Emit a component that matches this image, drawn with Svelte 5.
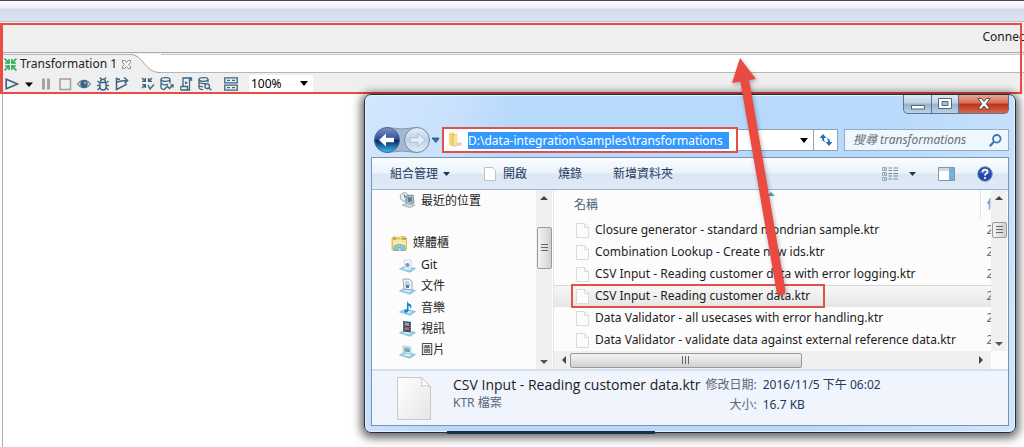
<script lang="ts">
  type NavItem = { name: string; kind: string; child: boolean } | null;

  // null leaves an empty row between the groups
  const navItems: NavItem[] = [
    { name: '最近的位置', kind: 'recent', child: true },
    null,
    { name: '媒體櫃', kind: 'library', child: false },
    { name: 'Git', kind: 'git', child: true },
    { name: '文件', kind: 'doc', child: true },
    { name: '音樂', kind: 'music', child: true },
    { name: '視訊', kind: 'video', child: true },
    { name: '圖片', kind: 'picture', child: true }
  ];

  const files = [
    'Closure generator - standard mondrian sample.ktr',
    'Combination Lookup - Create new ids.ktr',
    'CSV Input - Reading customer data with error logging.ktr',
    'CSV Input - Reading customer data.ktr',
    'Data Validator - all usecases with error handling.ktr',
    'Data Validator - validate data against external reference data.ktr'
  ];

  let selected = $state('CSV Input - Reading customer data.ktr');
  let path = $state('D:\\data-integration\\samples\\transformations');
  let search = $state('');
  let zoom = $state('100%');
</script>

<main>
  <div class="titlebar"></div>

  <section class="spoon">
    <header class="perspective">Connect</header>

    <div class="tabs">
      <div class="tab">
        <svg width="13" height="13" viewBox="0 0 12 12" fill="none" stroke="#22ab52" stroke-width="1.4">
          <path d="M0.5 0.5l4 4M11.5 0.5l-4 4M0.5 11.5l4-4M11.5 11.5l-4-4" />
          <path d="M1 4.7h3.7V1M11 4.7H7.3V1M1 7.3h3.7V11M11 7.3H7.3V11" />
        </svg>
        <span>Transformation 1</span>
        <button class="tab-close" aria-label="Close tab">
          <svg width="9" height="9" viewBox="0 0 9 9" fill="#fff" stroke="#777" stroke-width="0.9">
            <path d="M0.5 0.5h2l2 2 2-2h2v2l-2 2 2 2v2h-2l-2-2-2 2h-2v-2l2-2-2-2z" />
          </svg>
        </button>
      </div>
      <svg class="tab-curve" width="30" height="19" viewBox="0 0 30 19">
        <path d="M0 0.5c12 0 14 18 28 18H30V19H0z" fill="#efefef" />
        <path d="M0 0.5c12 0 14 18 28 18H30" fill="none" stroke="#a3a3a3" />
      </svg>
      <div class="tab-rest"></div>
    </div>

    <div class="toolbar">
      <button aria-label="Run">
        <svg width="14" height="14" viewBox="0 0 14 14" fill="none" stroke="#3d6480" stroke-width="1.6">
          <path d="M1.2 2.2v9.6L12.500 7z" />
        </svg>
      </button>
      <button aria-label="Run options">
        <svg width="10" height="14" viewBox="0 0 10 14"><path d="M1 5.500h8L5 10z" fill="#000" /></svg>
      </button>
      <button aria-label="Pause">
        <svg width="14" height="14" viewBox="0 0 14 14" fill="#a3a3a3"><path d="M3 1.500h3v11H3zM8 1.500h3v11H8z" /></svg>
      </button>
      <button aria-label="Stop">
        <svg width="14" height="14" viewBox="0 0 14 14" fill="none" stroke="#a0a0a0" stroke-width="1.5">
          <path d="M2 2h10.500v10.500H2z" />
        </svg>
      </button>
      <button aria-label="Preview">
        <svg width="14" height="14" viewBox="0 0 14 14">
          <path d="M0.500 7c3.500-5 9.500-5 13 0c-3.500 5-9.500 5-13 0z" fill="#c8d5de" stroke="#3d6480" />
          <circle cx="7" cy="7" r="3.700" fill="#3d6480" />
          <circle cx="8" cy="6" r="1" fill="#b9cad6" />
        </svg>
      </button>
      <button aria-label="Debug">
        <svg width="14" height="14" viewBox="0 0 14 14" fill="none" stroke="#3d6480" stroke-width="1.4">
          <path d="M4 5.500h6v4.500q0 3-3 3t-3-3zM4.500 5.200q0-3 2.500-3t2.500 3M4 8.500H1M10 8.500h3M4 6L1.500 4M10 6l2.500-2M4 10.500L1.500 13M10 10.500l2.500 2.500M5.500 2.500L4 0.500M8.500 2.500L10 0.500" />
        </svg>
      </button>
      <button aria-label="Replay">
        <svg width="14" height="14" viewBox="0 0 14 14" fill="none" stroke="#3d6480" stroke-width="1.500">
          <path d="M5 2.500L1.500 1.500v11L12 7.200M1.500 5C5 5 7 3 12.500 3.500M9 0.500l3.500 3L9.500 6.500" />
        </svg>
      </button>
      <button class="spaced" aria-label="Verify">
        <svg width="14" height="14" viewBox="0 0 14 14" fill="none" stroke="#3d6480" stroke-width="1.400">
          <path d="M1 1l3 3M11 1L8 4M1 11l3-3M1 4.400h3.300V1M11 4.400H7.600V1M1 7.600h3.300V11M7 8l2 4 4-4.500" />
        </svg>
      </button>
      <button aria-label="Analyze impact">
        <svg width="14" height="14" viewBox="0 0 14 14" fill="none" stroke="#3d6480" stroke-width="1.300">
          <ellipse cx="5.500" cy="2.500" rx="4.500" ry="1.800" />
          <path d="M1 2.500v8.500q1 1.500 4 1.700M10 2.500v4M1 6.500q3 2 7 1M4.500 12l3-2.500 2 2L13 8M10.500 8H13v2.500" />
        </svg>
      </button>
      <button aria-label="Get SQL">
        <svg width="14" height="14" viewBox="0 0 14 14" fill="none" stroke="#3d6480" stroke-width="1.300">
          <path d="M4 9V1h8.500v2H10.500v10H2q-1-1.500 0-3.500h6.500V13M10.500 1v3" />
          <path d="M6 4l3 1.700-3 1.700z" fill="#3d6480" stroke="none" />
        </svg>
      </button>
      <button aria-label="Explore database">
        <svg width="14" height="14" viewBox="0 0 14 14" fill="none" stroke="#3d6480" stroke-width="1.300">
          <ellipse cx="5.500" cy="2.500" rx="4.500" ry="1.800" />
          <path d="M1 2.500v8.500q1 1.500 4 1.700M10 2.500v3M1 5.300q3 2 7 1M1 8.500q2 1.500 4 1.300" />
          <circle cx="9.200" cy="9.200" r="2.300" />
          <path d="M11 11l2.300 2.300" />
        </svg>
      </button>
      <button class="spaced" aria-label="Show results">
        <svg width="14" height="14" viewBox="0 0 14 14" fill="none" stroke="#3d6480" stroke-width="1.300">
          <path d="M0.800 0.800h12.400v5H0.800zM0.800 8.200h12.400v5H0.800zM3 3.300h3M8 3.300h3M3 10.700h3M8 10.700h3" />
        </svg>
      </button>
      <div class="zoom">
        <select aria-label="Zoom" bind:value={zoom}>
          <option>100%</option>
          <option>75%</option>
          <option>50%</option>
        </select>
        <svg width="8" height="5" viewBox="0 0 8 5"><path d="M0 0h8L4 5z" fill="#000" /></svg>
      </div>
    </div>
  </section>

  <div class="canvas"></div>

  <section class="explorer">
    <div class="caption">
      <button class="min" aria-label="Minimize">
        <svg width="14" height="14" viewBox="0 0 14 14"><rect x="0.500" y="8.500" width="13" height="3.500" fill="#fff" stroke="#5b6674" /></svg>
      </button>
      <button class="max" aria-label="Maximize">
        <svg width="14" height="14" viewBox="0 0 14 14">
          <path d="M0.500 1.500h13v10H0.500z" fill="#fff" stroke="#5b6674" />
          <path d="M4 4.500h6v4H4z" fill="#a9bed6" stroke="#5b6674" />
        </svg>
      </button>
      <button class="close" aria-label="Close">
        <svg width="14" height="14" viewBox="0 0 14 14">
          <path d="M1 1.500h3.500L7 4.500l2.500-3H13L9.200 6.800 13 12H9.500L7 9l-2.500 3H1l3.800-5.200z" fill="#fff" stroke="#5a4650" />
        </svg>
      </button>
    </div>

    <div class="address-row">
      <div class="history">
        <svg width="68" height="28" viewBox="0 0 68 28">
          <defs>
            <linearGradient id="back" x1="0" y1="0" x2="0" y2="1">
              <stop offset="0" stop-color="#8193c4" />
              <stop offset="0.480" stop-color="#2b4a9a" />
              <stop offset="0.520" stop-color="#0b2267" />
              <stop offset="1" stop-color="#36c5f4" />
            </linearGradient>
            <linearGradient id="forward" x1="0" y1="0" x2="0" y2="1">
              <stop offset="0" stop-color="#e4eefa" />
              <stop offset="0.500" stop-color="#bfd2e8" />
              <stop offset="1" stop-color="#e0ecf8" />
            </linearGradient>
          </defs>
          <path d="M16 1.500q15 3 30 0v25q-15-3-30 0z" fill="#a3bad4" stroke="#7f95ae" />
          <circle cx="16" cy="14" r="12.500" fill="url(#back)" stroke="#4f6484" />
          <path d="M8 14l7-6.500v4.300h8v4.400h-8v4.300z" fill="#fff" />
          <circle cx="46" cy="14" r="12.500" fill="url(#forward)" stroke="#76879c" />
          <path d="M54 14l-7-6.500v4.300h-8v4.400h8v4.300z" fill="#e6eef7" stroke="#a4b7cd" stroke-width="0.800" />
          <path d="M61 12h7.500l-3.700 4.500z" fill="#2b7dab" stroke="#164a70" stroke-width="0.800" />
        </svg>
      </div>
      <div class="address">
        <div class="path marked">
          <svg width="16" height="16" viewBox="0 0 16 16">
            <path d="M2 1l5-0.700v14.500L2 13z" fill="#f3d774" />
            <path d="M5 2.500l5-1v11l-4 2.800z" fill="#e4bd4e" />
            <path d="M6.500 3l4-1v11l-4 2z" fill="#f8e497" />
            <path d="M9 11l5-1 1 3-7 2z" fill="#d9d4c4" />
          </svg>
          <input aria-label="Address" bind:value={path} spellcheck="false" />
        </div>
        <button class="drop" aria-label="Previous locations">
          <svg width="8" height="5" viewBox="0 0 8 5"><path d="M0 0h8L4 5z" fill="#000" /></svg>
        </button>
        <button class="refresh" aria-label="Refresh">
          <svg width="14" height="14" viewBox="0 0 14 14" fill="#2c6cb5">
            <path d="M4 1L0.500 5H3v0.500q0 2.500 3 3.500Q5 7.500 5 5h2.500z" />
            <path d="M10 13l3.500-4H11v-0.500q0-2.500-3-3.500 1 1.500 1 4H6.500z" />
          </svg>
        </button>
      </div>
      <div class="search">
        <input aria-label="Search" placeholder="搜尋 transformations" bind:value={search} />
        <svg width="13" height="13" viewBox="0 0 13 13" fill="none" stroke="#3b76b4" stroke-width="1.800">
          <circle cx="7.800" cy="4.800" r="3.800" fill="#eef6fd" />
          <path d="M5 7.800L0.800 12.200" stroke-width="2.200" />
        </svg>
      </div>
    </div>

    <div class="client">
      <nav class="commands">
        <button class="organize">組合管理
          <svg width="7" height="4" viewBox="0 0 7 4"><path d="M0 0h7L3.500 4z" fill="#1e395b" /></svg>
        </button>
        <button class="open">
          <svg width="12" height="14" viewBox="0 0 12 14"><path d="M0.500 0.500h8l3 3v10h-11z" fill="#fff" stroke="#bfc3c8" /></svg>
          開啟
        </button>
        <button>燒錄</button>
        <button>新增資料夾</button>
        <span class="filler"></span>
        <button class="views" aria-label="Change view">
          <svg width="16" height="14" viewBox="0 0 16 14">
            <path d="M0.500 0.500h4v3h-4zM0.500 5.500h4v3h-4zM0.500 10.500h4v3h-4z" fill="#dfe8ee" stroke="#8b9aaa" stroke-width="0.800" />
            <path d="M2 1.500h1.500v1H2z" fill="#4a9a58" />
            <path d="M2 6.500h1.500v1H2z" fill="#c8443c" />
            <path d="M2 11.500h1.500v1H2z" fill="#4a9a58" />
            <path d="M6.500 1h3.500M11.500 1H16M6.500 3.500h3.500M11.500 3.500H16M6.500 6.500h3.500M11.500 6.500H16M6.500 9h3.500M11.500 9H16M6.500 12h3.500M11.500 12H16" stroke="#75879a" />
          </svg>
        </button>
        <button class="view-menu" aria-label="More view options">
          <svg width="7" height="4" viewBox="0 0 7 4"><path d="M0 0h7L3.500 4z" fill="#1e395b" /></svg>
        </button>
        <button class="preview" aria-label="Preview pane">
          <svg width="17" height="14" viewBox="0 0 17 14">
            <path d="M0.500 0.500h16v13h-16z" fill="#fff" stroke="#8395a8" />
            <path d="M1 1h10v3H1z" fill="#cfdce8" />
            <path d="M11 1h5v12h-5z" fill="#72b3d6" />
          </svg>
        </button>
        <button aria-label="Help">
          <svg width="16" height="16" viewBox="0 0 16 16">
            <circle cx="8" cy="8" r="7.300" fill="#2447ad" stroke="#8291ad" />
            <path d="M2.500 7a5.600 5.600 0 0 1 11 0q-5 2-11 0z" fill="#6384cf" opacity="0.600" />
            <path d="M5.500 6.200q0-2.500 2.500-2.500t2.500 2.100q0 1.200-1.300 1.900T8 9.600" fill="none" stroke="#fff" stroke-width="1.700" />
            <circle cx="8" cy="12" r="1.100" fill="#fff" />
          </svg>
        </button>
      </nav>

      <div class="panes">
        <div class="tree">
          <ul>
            {#each navItems as item}
              {#if item}
                <li class:child={item.child}>
                  <svg width="17" height="17" viewBox="0 0 17 17">
                    {#if item.kind === 'library'}
                      <path d="M1 3l2-1.500 3 1h3l1-1h3l2.500 1.500v11.500l-2 1H2l-1-1z" fill="#f2d36b" stroke="#d0a840" stroke-width="0.700" />
                      <path d="M2 3h3v1.500H2zM11 3h4v1.500h-4z" fill="#7fae58" />
                      <path d="M2 5h13v5H2z" fill="#fae7a0" />
                      <path d="M3 15.500v-2q0-4 5.500-4t5.500 4v2h-3.500v-1.500q0-1.500-2-1.500t-2 1.500v1.500z" fill="#7fcbee" stroke="#4a9fce" stroke-width="0.600" />
                    {:else if item.kind === 'recent'}
                      <circle cx="5.500" cy="5" r="4.300" fill="#e4edf0" stroke="#9aa8ae" />
                      <path d="M5.500 2.500V5h2" fill="none" stroke="#527c91" />
                      <path d="M7 4l7-1 1 8-8 1z" fill="#b9c3c9" stroke="#808b91" />
                      <path d="M8.500 5.500l4-0.500 0.700 4.500-4.200 0.500z" fill="#4f8398" />
                      <path d="M3 13l5-2 8 2-5 3z" fill="#c1d5df" stroke="#8ba2ae" stroke-width="0.600" />
                    {:else}
                      <path d="M0.500 13l6-3 10 2.500-5.500 3.800z" fill="#8dcdec" stroke="#6bb3d9" stroke-width="0.600" />
                      <path d="M3 13l5-1.500 5 1.500-3 1.300z" fill="#d8f0fb" />
                      {#if item.kind === 'git'}
                        <path d="M5 4h7l1 8H6z" fill="#eef4f8" stroke="#c5d2da" stroke-width="0.700" />
                        <circle cx="8.500" cy="9" r="2" fill="#7798b3" />
                      {:else if item.kind === 'doc'}
                        <path d="M4 1h6l3 2.500V12l-8-1z" fill="#f3f7f9" stroke="#7f929f" stroke-width="0.800" />
                        <path d="M6 4h4M6 6h5M6 8h5" stroke="#8ca9be" />
                        <path d="M7 7h3v3H7z" fill="#5184a8" />
                      {:else if item.kind === 'music'}
                        <path d="M8 1q0 3 4 4.500 1 2-0.500 4Q11 7 9.500 6.500V12q-1 2.500-4 1.500-1.500-2.500 2.500-3z" fill="#1d82cb" />
                      {:else if item.kind === 'video'}
                        <path d="M4 1l8 1v10.500l-8-1z" fill="#354451" />
                        <path d="M6 2.500l4 0.500v3l-4-0.500z" fill="#78a9cf" />
                        <path d="M6 7l4 0.500v3L6 10z" fill="#b66d43" />
                        <path d="M5 2v9M11.200 3v9" stroke="#c8d3da" stroke-width="0.800" stroke-dasharray="1 1" />
                      {:else}
                        <path d="M4 4l8 1v6.500l-8-1z" fill="#f7fbfd" stroke="#a9bbc6" stroke-width="0.800" />
                        <path d="M5.200 5.300l5.600 0.700v2.500l-5.600-0.500z" fill="#65b0e2" />
                        <path d="M5.200 8l5.600 0.500v1.800L5.200 9.500z" fill="#5d9a74" />
                      {/if}
                    {/if}
                  </svg>
                  <a href="#{item.kind}">{item.name}</a>
                </li>
              {:else}
                <li aria-hidden="true"></li>
              {/if}
            {/each}
          </ul>
          <div class="vbar">
            <span class="arrow up"></span>
            <span class="thumb tall"></span>
            <span class="arrow down"></span>
          </div>
        </div>

        <div class="list">
          <div class="list-main">
            <table>
              <thead>
                <tr>
                  <th>名稱<span class="sort"></span></th>
                  <th class="date">修改日期</th>
                </tr>
              </thead>
              <tbody>
                {#each files as file}
                  <tr class:selected={file === selected} onclick={() => (selected = file)}>
                    <td>
                      <span class="file" class:marked={file === selected}>
                        <svg width="13" height="15" viewBox="0 0 13 15">
                          <path d="M0.500 0.500h8l4 4v10h-12z" fill="#fcfcfc" stroke="#dadada" />
                          <path d="M8.500 0.500v4h4" fill="none" stroke="#dadada" />
                        </svg>
                        {file}
                      </span>
                    </td>
                    <td class="date">2016</td>
                  </tr>
                {/each}
              </tbody>
            </table>
            <div class="hbar">
              <span class="arrow left"></span>
              <span class="thumb wide"></span>
              <span class="arrow right"></span>
            </div>
          </div>
          <div class="vbar list-scroll">
            <span class="arrow up"></span>
            <span class="thumb short"></span>
            <span class="arrow down"></span>
          </div>
        </div>
      </div>

      <footer class="details">
        <svg width="34" height="43" viewBox="0 0 34 43">
          <defs>
            <linearGradient id="page" x1="0" y1="0" x2="1" y2="1">
              <stop offset="0" stop-color="#fff" />
              <stop offset="1" stop-color="#e6e6e6" />
            </linearGradient>
          </defs>
          <path d="M0.500 0.500h24l9 9v33h-33z" fill="url(#page)" stroke="#c9c9c9" />
          <path d="M24.500 0.500q1 5 0 8.500 4-1 9 0.500z" fill="#fff" stroke="#c9c9c9" />
        </svg>
        <div class="summary">
          <strong>{selected}</strong>
          <span class="type">KTR 檔案</span>
        </div>
        <dl>
          <dt>修改日期:</dt>
          <dd>2016/11/5 下午 06:02</dd>
          <dt>大小:</dt>
          <dd>16.7 KB</dd>
        </dl>
      </footer>
    </div>
  </section>

  <!-- Arrow from the chosen file up to the tab area -->
  <svg class="drag-arrow" width="62" height="244" viewBox="0 0 62 244">
    <path d="M48 235L12 26" stroke="#e94b43" stroke-width="9" stroke-linecap="round" />
    <path d="M7 2l16 21-24 4z" fill="#e94b43" />
  </svg>
</main>

<style>
  :global(body) {
    margin: 0;
  }

  main {
    position: relative;
    display: flex;
    flex-direction: column;
    min-height: 100vh;
    overflow: hidden;
    background: #fff;
    color: #1c1c1c;
    font: 12px/16px 'Noto Sans', 'Noto Sans CJK TC', sans-serif;
  }

  button {
    display: flex;
    align-items: center;
    justify-content: center;
    padding: 0;
    border: 0;
    background: none;
    color: inherit;
    font: inherit;
  }

  svg {
    flex: none;
  }

  .titlebar {
    height: 20px;
    border-top: 1px solid #45475a;
    border-bottom: 1px solid #bcc0c8;
    background: linear-gradient(#fcfcff 0, #eef0fa 7px, #d5dcee 8px, #dde2f2 20px);
  }

  .spoon {
    position: relative;
    background: #efefef;
  }

  .spoon::after {
    content: '';
    position: absolute;
    inset: 1px 2px -1px 0;
    border: 2px solid #ea4b43;
    border-left-width: 3px;
    pointer-events: none;
  }

  .perspective {
    display: flex;
    justify-content: flex-end;
    height: 30px;
    margin-right: -5px;
    border-bottom: 1px solid #aaaab4;
    line-height: 30px;
  }

  .tabs {
    display: flex;
    height: 19px;
    margin-top: 1px;
  }

  .tab {
    display: flex;
    align-items: center;
    gap: 3px;
    padding-left: 4px;
    border-top: 1px solid #b4b4b4;
  }

  .tab-close {
    margin-left: 2px;
  }

  .tab-curve {
    background: #fff;
  }

  .tab-rest {
    flex: 1;
    border-top: 1px solid #c8c8c8;
    border-bottom: 1px solid #b8b8b8;
    background: #fff;
  }

  .toolbar {
    display: flex;
    align-items: center;
    gap: 5px;
    height: 20px;
    padding: 1px 0 0 5px;
    box-sizing: border-box;
  }

  .spaced {
    margin-left: 7px;
  }

  .zoom {
    display: flex;
    align-items: center;
    width: 64px;
    margin-left: 6px;
    background: #fff;
  }

  .zoom select {
    flex: 1;
    height: 18px;
    padding: 0 2px;
    border: 0;
    appearance: none;
    background: none;
    font: inherit;
  }

  .zoom svg {
    margin-right: 5px;
  }

  .canvas {
    flex: 1;
    margin-left: 2px;
    border-left: 1px solid #b0b0b0;
  }

  .explorer {
    position: absolute;
    top: 94px;
    left: 364px;
    right: 8px;
    padding: 0 6px 6px;
    border: 1px solid #22303f;
    border-radius: 7px;
    background: linear-gradient(105deg, #d3e7fe 0, #c9e1fd 90px, #b7d9fc 150px, #b7d9fc 70%, #cfe5fd);
    box-shadow:
      inset 0 0 0 1px #e6f3ff,
      0 2px 10px 3px rgba(0, 0, 0, 0.6);
  }

  /* dark shape showing through the glass edge */
  .explorer::after {
    content: '';
    position: absolute;
    bottom: -2px;
    left: 82px;
    width: 208px;
    height: 3px;
    background: #183042;
  }

  .caption {
    display: flex;
    justify-content: flex-end;
    height: 31px;
  }

  .caption button {
    height: 19px;
    border: 1px solid #5e7389;
    border-top: 0;
    border-left-width: 0;
    background: linear-gradient(#dbe9f6 0, #bfd2e6 45%, #98b2cc 50%, #b9d2e9);
  }

  .caption .min {
    width: 29px;
    border-left-width: 1px;
    border-radius: 0 0 0 5px;
  }

  .caption .max {
    width: 27px;
  }

  .caption .close {
    width: 50px;
    border-radius: 0 0 5px 0;
    background: linear-gradient(#e6a596 0, #d2705c 45%, #bc3119 50%, #d9694c);
  }

  .address-row {
    display: flex;
    align-items: center;
    height: 28px;
    margin-bottom: 3px;
  }

  .history {
    display: flex;
    margin-right: 5px;
  }

  .address {
    display: flex;
    flex: 1;
    align-items: center;
    height: 20px;
    border: 1px solid #8da3ba;
    border-left: 0;
    background: #fff;
  }

  .marked {
    outline: 2px solid #e2504a;
  }

  .path {
    display: flex;
    align-items: center;
    gap: 5px;
    height: 22px;
    padding: 0 7px 0 3px;
    background: #fff;
  }

  .path input {
    width: 261px;
    height: 17px;
    padding: 0;
    border: 0;
    background: #3399ff;
    color: #fff;
    font: inherit;
  }

  .drop {
    margin: 0 5px 0 auto;
  }

  .refresh {
    width: 24px;
    height: 20px;
    border-left: 1px solid #8da3ba;
  }

  .search {
    display: flex;
    align-items: center;
    width: 163px;
    height: 20px;
    margin-left: 6px;
    border: 1px solid #94abc2;
    background: #eef6fe;
    box-sizing: content-box;
  }

  .search input {
    flex: 1;
    min-width: 0;
    padding: 0 0 0 8px;
    border: 0;
    background: none;
    font: inherit;
  }

  .search input::placeholder {
    color: #6b6f75;
    font-style: italic;
    opacity: 1;
  }

  .search svg {
    margin-right: 6px;
  }

  .client {
    border: 1px solid #7e93a9;
    background: #fcfcfc;
  }

  .commands {
    display: flex;
    align-items: center;
    height: 31px;
    padding: 0 15px 0 18px;
    border-bottom: 1px solid #9fb4cd;
    background: linear-gradient(#fbfdff 0, #eaf2fb 48%, #dce7f4 52%, #dde9f6);
    color: #1e395b;
  }

  .organize {
    gap: 5px;
    margin-right: 3px;
  }

  .open {
    gap: 7px;
  }

  .commands button + button {
    margin-left: 31px;
  }

  .filler {
    flex: 1;
  }

  .commands .view-menu {
    margin-left: 11px;
  }

  .commands .preview,
  .commands .preview + button {
    margin-left: 22px;
  }

  .panes {
    display: flex;
  }

  .tree {
    display: flex;
    width: 181px;
    border-right: 1px solid #dfe6f0;
  }

  .tree ul {
    display: flex;
    flex: 1;
    flex-direction: column;
    margin: 0;
    padding: 0 0 8px;
    list-style: none;
  }

  .tree li {
    display: flex;
    flex: 1;
    align-items: center;
    gap: 5px;
    padding-left: 19px;
  }

  .tree li.child {
    padding-left: 27px;
  }

  .tree a {
    color: inherit;
    text-decoration: none;
  }

  .vbar {
    display: flex;
    flex-direction: column;
    align-items: center;
    width: 16px;
    margin-right: 1px;
    background: #f0f0f0;
  }

  .arrow {
    border: 4px solid transparent;
  }

  .up {
    margin: 2px 0 8px;
    border-bottom-color: #444;
  }

  .down {
    margin: auto 0 1px;
    border-top-color: #555;
  }

  .left {
    margin: 0 4px 0 0;
    border-right-color: #444;
  }

  .right {
    margin-left: auto;
    border-left-color: #444;
  }

  .thumb {
    display: flex;
    align-items: center;
    justify-content: center;
    border: 1px solid #9a9a9a;
    border-radius: 2px;
    background: linear-gradient(90deg, #f4f4f4, #e3e3e3 50%, #cfcfcf);
    box-sizing: border-box;
  }

  .thumb::after {
    content: '';
    width: 7px;
    height: 8px;
    background: repeating-linear-gradient(#666 0 1px, transparent 1px 3px);
  }

  .tall {
    width: 15px;
    height: 42px;
    margin-top: 19px;
  }

  .short {
    width: 15px;
    height: 16px;
    margin-top: 14px;
  }

  .wide {
    width: 54%;
    height: 15px;
    background: linear-gradient(#f4f4f4, #e3e3e3 50%, #cfcfcf);
  }

  .wide::after {
    background: repeating-linear-gradient(90deg, #666 0 1px, transparent 1px 3px);
  }

  .list {
    display: flex;
    flex: 1;
    min-width: 0;
  }

  .list-main {
    flex: 1;
    min-width: 0;
  }

  table {
    width: 100%;
    table-layout: fixed;
    border-collapse: collapse;
  }

  th {
    position: relative;
    height: 29px;
    padding: 0 0 0 20px;
    color: #4c607a;
    font-weight: 400;
    text-align: left;
  }

  .sort {
    position: absolute;
    top: 2px;
    left: 50%;
    border: 4px solid transparent;
    border-top: 0;
    border-bottom-color: #5c9cbf;
  }

  td {
    height: 22px;
    padding: 0 0 0 22px;
    white-space: nowrap;
  }

  .date {
    width: 4px;
    padding: 0 0 0 6px;
    overflow: hidden;
    color: #6d6d6d;
    white-space: nowrap;
  }

  th.date {
    border-left: 1px solid #dfe6ee;
    color: #4c8ac8;
  }

  .selected {
    background: linear-gradient(#f8f8f8, #e5e5e5);
    box-shadow: inset 0 1px #d9d9d9;
  }

  .file {
    display: inline-flex;
    align-items: center;
    gap: 6px;
    height: 20px;
    padding-right: 13px;
    vertical-align: middle;
  }

  .file.marked {
    margin-left: -3px;
    padding-left: 3px;
  }

  .hbar {
    display: flex;
    align-items: center;
    height: 18px;
    padding: 0 4px;
    background: #f0f0f0;
  }

  .list-scroll {
    margin-bottom: 18px;
  }

  .details {
    display: flex;
    height: 54px;
    padding: 0 25px;
    border-top: 2px solid #d3dfee;
    background: #f0f4fc;
    color: #1e395b;
  }

  .details > svg {
    margin: 6px 22px 0 0;
  }

  .summary {
    display: flex;
    flex-direction: column;
    margin: 4px 5px 0 0;
  }

  .summary strong {
    color: #1c1c1c;
    font-family: 'Open Sans', sans-serif;
    font-size: 14px;
    font-weight: 400;
    line-height: 20px;
  }

  .type,
  dt {
    color: #5a6779;
  }

  dl {
    display: grid;
    grid-template-columns: auto auto;
    align-content: start;
    gap: 4px 6px;
    margin: 6px 0 0;
  }

  dt {
    text-align: right;
  }

  dd {
    margin: 0;
  }

  .drag-arrow {
    position: absolute;
    top: 56px;
    left: 733px;
    overflow: visible;
    filter: drop-shadow(1px 2px 2px rgba(0, 0, 0, 0.3));
    pointer-events: none;
  }
</style>
